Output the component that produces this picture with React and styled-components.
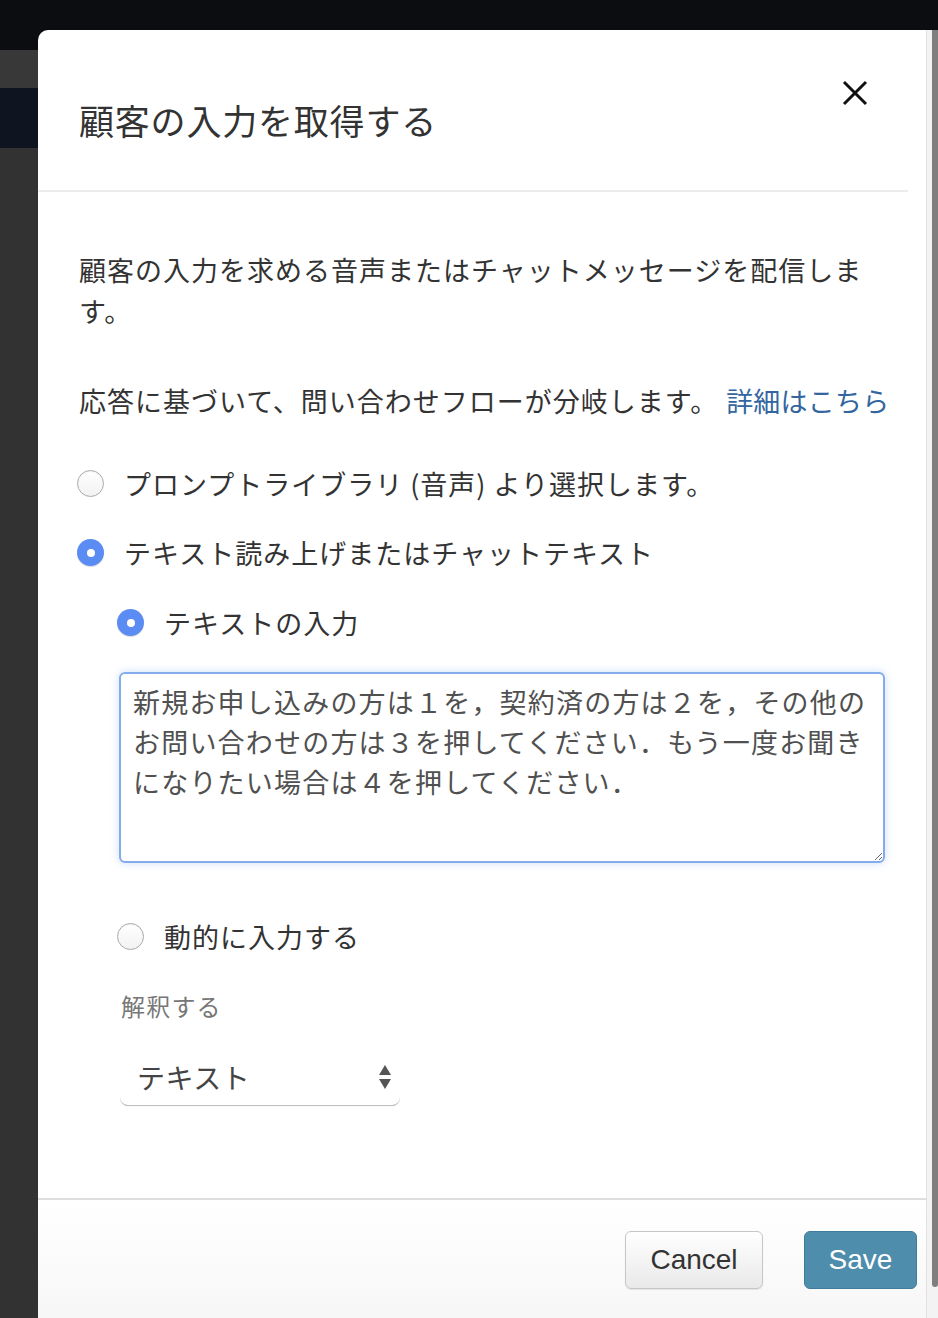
import React from "react";
import styled, { createGlobalStyle } from "styled-components";

const GlobalStyle = createGlobalStyle`
  html, body { margin: 0; padding: 0; }
  body {
    background: #323232;
    font-family: "Noto Sans CJK JP", "Noto Sans", sans-serif;
    -webkit-font-smoothing: antialiased;
  }
`;

const Page = styled.div`
  position: relative;
  width: 938px;
  height: 1318px;
  overflow: hidden;
  background: #323232;
  display: flex;
  flex-direction: column;
`;

const TopBar = styled.div`
  height: 50px;
  background: #0c0d10;
  flex: none;
`;

const Band = styled.div`
  height: ${(p) => p.$h}px;
  background: ${(p) => p.$bg};
  flex: none;
`;

const Modal = styled.div`
  position: absolute;
  left: 38px;
  top: 30px;
  width: 888px;
  height: 1300px;
  background: #fff;
  border-top-left-radius: 10px;
  display: flex;
  flex-direction: column;
  color: #333;
`;

const ScrollTrack = styled.div`
  position: absolute;
  left: 926px;
  top: 30px;
  width: 12px;
  height: 1288px;
  background: #f3f3f3;
  border-left: 1px solid #e2e2e2;
  box-sizing: border-box;
  display: flex;
  justify-content: flex-end;
`;

const ScrollThumb = styled.div`
  width: 6px;
  height: 1257px;
  background: #7f7f7f;
  border-radius: 0 0 4px 4px;
`;

const Header = styled.div`
  height: 160px;
  margin-right: 18px;
  border-bottom: 2px solid #ececec;
  padding: 0 40px 0 41px;
  display: flex;
  justify-content: space-between;
  align-items: flex-start;
  flex: none;
`;

const Title = styled.h1`
  margin: 68px 0 0;
  font-size: 35px;
  font-weight: 400;
  letter-spacing: 0.8px;
  line-height: 44px;
  color: #333;
`;

const CloseButton = styled.button`
  margin-top: 48px;
  margin-right: -2px;
  width: 30px;
  height: 30px;
  padding: 0;
  border: none;
  background: none;
  display: flex;
  align-items: center;
  justify-content: center;
  cursor: pointer;
`;

const Body = styled.div`
  padding: 57px 20px 93px 41px;
  display: flex;
  flex-direction: column;
  align-items: flex-start;
  flex: none;
`;

const Paragraph = styled.p`
  margin: ${(p) => p.$mt || 0}px 0 0;
  font-size: 27px;
  line-height: 41px;
  letter-spacing: 1px;
  color: #333;
  white-space: ${(p) => (p.$nowrap ? "nowrap" : "normal")};
`;

const Link = styled.a`
  color: #33659f;
  text-decoration: none;
  margin-left: 8px;
  letter-spacing: 0.2px;
`;

const RadioRow = styled.label`
  display: flex;
  align-items: center;
  height: 41px;
  margin: ${(p) => p.$mt}px 0 0 ${(p) => (p.$nested ? 38 : -2)}px;
  cursor: pointer;
`;

const RadioDot = styled.span`
  width: 27px;
  height: 27px;
  border-radius: 50%;
  box-sizing: border-box;
  flex: none;
  margin-right: 20px;
  position: relative;
  ${(p) =>
    p.$checked
      ? `
    background: #5a8cf3;
    box-shadow: 0 1px 1px rgba(0,0,0,0.15);
    &::after {
      content: "";
      position: absolute;
      left: 9.5px; top: 9.5px;
      width: 8px; height: 8px;
      border-radius: 50%;
      background: #fff;
    }
  `
      : `
    background: linear-gradient(#ffffff, #f2f2f2);
    border: 1.5px solid #aaaaaa;
    box-shadow: inset 0 1px 1px rgba(0,0,0,0.05);
  `}
`;

const RadioLabel = styled.span`
  font-size: 27px;
  letter-spacing: 1px;
  line-height: 41px;
  color: #333;
`;

const TextArea = styled.textarea`
  margin: 29px 0 0 40px;
  width: 766px;
  height: 191px;
  box-sizing: border-box;
  border: 2px solid #84abec;
  border-radius: 6px;
  box-shadow: 0 0 8px rgba(110, 160, 235, 0.35);
  padding: 8px 10px 8px 12px;
  font-family: "Noto Sans CJK JP", sans-serif;
  font-size: 27px;
  line-height: 40px;
  letter-spacing: 1.2px;
  color: #505050;
  resize: both;
  outline: none;
  overflow: hidden;
`;

const FieldLabel = styled.div`
  margin: 31px 0 0 42px;
  font-size: 24px;
  line-height: 36px;
  letter-spacing: 1.2px;
  color: #777;
`;

const Select = styled.div`
  margin: 24px 0 0 41px;
  width: 280px;
  height: 57px;
  box-sizing: border-box;
  padding: 0 8px 0 17px;
  border-radius: 0 0 8px 8px;
  box-shadow: 0 2px 1px -1px #bdbdbd, 0 1px 0 0 #d0d0d0;
  display: flex;
  align-items: center;
  justify-content: space-between;
  font-size: 28px;
  letter-spacing: 0.5px;
  color: #444;
`;

const Footer = styled.div`
  flex: 1;
  border-top: 2px solid #dedede;
  background: linear-gradient(#ffffff, #f6f6f6);
  display: flex;
  justify-content: flex-end;
  align-items: flex-start;
  gap: 41px;
  padding: 31px 9px 0 0;
`;

const Button = styled.button`
  height: 58px;
  width: ${(p) => p.$w}px;
  border-radius: 6px;
  font-family: "Liberation Sans", Arial, sans-serif;
  font-size: 28px;
  cursor: pointer;
  ${(p) =>
    p.$primary
      ? `
    background: #4f8dad;
    border: 1.5px solid #3f7b9a;
    color: #fff;
  `
      : `
    background: linear-gradient(#ffffff, #e9e9e9);
    border: 1.5px solid #c6c6c6;
    color: #333;
    box-shadow: 0 1px 1px rgba(0,0,0,0.08);
  `}
`;

export default function App() {
  return (
    <>
      <GlobalStyle />
      <Page>
        <TopBar />
        <Band $h={38} $bg="#383838" />
        <Band $h={60} $bg="#0e1420" />
        <Band $h={1170} $bg="#323232" />
        <Modal>
          <Header>
            <Title>顧客の入力を取得する</Title>
            <CloseButton aria-label="close">
              <svg width="26" height="26" viewBox="0 0 26 26">
                <path d="M2 2 L24 24 M24 2 L2 24" stroke="#111" strokeWidth="3" fill="none" />
              </svg>
            </CloseButton>
          </Header>
          <Body>
            <Paragraph>
              顧客の入力を求める音声またはチャットメッセージを配信しま
              <br />
              す。
            </Paragraph>
            <Paragraph $mt={49} $nowrap>
              応答に基づいて、問い合わせフローが分岐します。
              <Link href="#">詳細はこちら</Link>
            </Paragraph>
            <RadioRow $mt={42}>
              <RadioDot />
              <RadioLabel>プロンプトライブラリ (音声) より選択します。</RadioLabel>
            </RadioRow>
            <RadioRow $mt={28}>
              <RadioDot $checked />
              <RadioLabel>テキスト読み上げまたはチャットテキスト</RadioLabel>
            </RadioRow>
            <RadioRow $mt={29} $nested>
              <RadioDot $checked />
              <RadioLabel>テキストの入力</RadioLabel>
            </RadioRow>
            <TextArea
              readOnly
              defaultValue="新規お申し込みの方は１を，契約済の方は２を，その他のお問い合わせの方は３を押してください．もう一度お聞きになりたい場合は４を押してください．"
            />
            <RadioRow $mt={53} $nested>
              <RadioDot />
              <RadioLabel>動的に入力する</RadioLabel>
            </RadioRow>
            <FieldLabel>解釈する</FieldLabel>
            <Select>
              <span>テキスト</span>
              <svg width="14" height="26" viewBox="0 0 14 26">
                <path d="M7 1 L13 11 L1 11 Z" fill="#555" />
                <path d="M1 15 L13 15 L7 25 Z" fill="#555" />
              </svg>
            </Select>
          </Body>
          <Footer>
            <Button $w={138}>Cancel</Button>
            <Button $w={113} $primary>Save</Button>
          </Footer>
        </Modal>
        <ScrollTrack>
          <ScrollThumb />
        </ScrollTrack>
      </Page>
    </>
  );
}
